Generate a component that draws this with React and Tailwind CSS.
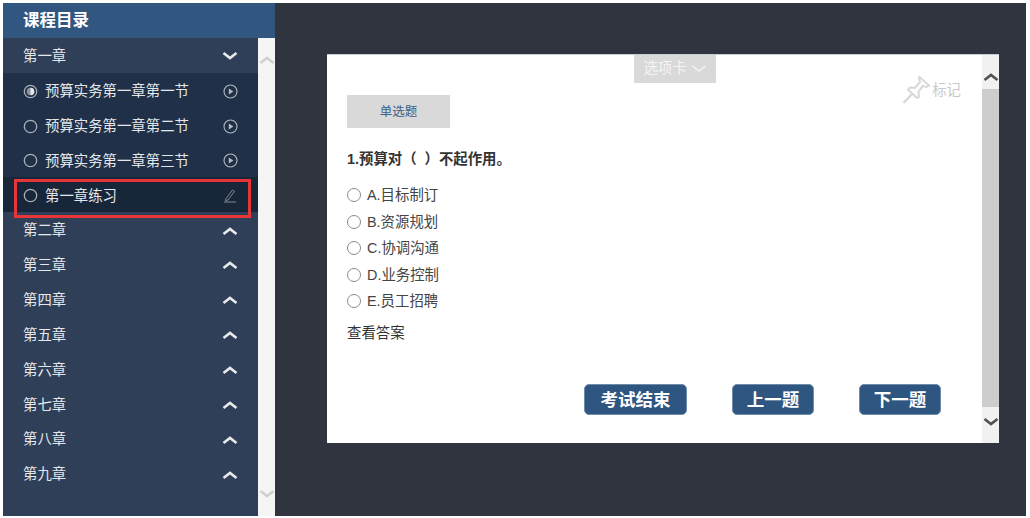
import React from "react";

const font = { fontFamily: '"Liberation Sans", "Noto Sans CJK SC", sans-serif' };

function Chevron({ up, className = "", thin }) {
  return (
    <svg width="16" height="10" viewBox="0 0 16 10" className={className}>
      <path d={up ? "M1.5 8 L8 3 L14.5 8" : "M1.5 2 L8 7 L14.5 2"} fill="none" stroke="currentColor" strokeWidth={thin ? "1.5" : "2.6"} />
    </svg>
  );
}

function Play() {
  return (
    <svg width="15" height="15" viewBox="0 0 15 15" className="text-[#b4bac2]">
      <circle cx="7.5" cy="7.5" r="6.5" fill="none" stroke="currentColor" strokeWidth="1.1" />
      <path d="M5.8 4.6 L10.4 7.5 L5.8 10.4 Z" fill="currentColor" />
    </svg>
  );
}

function Radio({ half }) {
  return (
    <svg width="15" height="15" viewBox="0 0 15 15" className="text-[#a9afb7]">
      <circle cx="7.5" cy="7.5" r="6.2" fill="none" stroke="currentColor" strokeWidth="1.3" />
      {half && <circle cx="7.5" cy="7.5" r="3.8" fill="#8f959d" />}
      {half && <path d="M7.5 3.7 A3.8 3.8 0 0 1 7.5 11.3 Z" fill="#e6e8ea" />}
    </svg>
  );
}

function Pencil() {
  return (
    <svg width="14" height="15" viewBox="0 0 14 15" className="text-[#808894]">
      <path d="M3 10.5 L9.5 2 L11.5 3.4 L5 12 L2.6 12.6 Z" fill="none" stroke="currentColor" strokeWidth="1" />
      <path d="M1 14 H13" stroke="currentColor" strokeWidth="1" />
    </svg>
  );
}

function Pin() {
  return (
    <svg width="30" height="30" viewBox="0 0 30 30" className="text-[#d8d8d8]">
      <path d="M17.5 2 L27 10.5 L24.5 12 L20.5 11 L16.5 17 L17 22 L15 23 L6 14.5 L8 12.5 L13 13 L18 7 L17 3.5 Z" fill="none" stroke="currentColor" strokeWidth="2" />
      <path d="M10 19 L1.5 28" stroke="currentColor" strokeWidth="2.4" />
    </svg>
  );
}

function Chapter({ title, open }) {
  return (
    <div className={`h-[34.85px] pt-[2px] flex items-center justify-between pl-[20px] pr-[20px] text-[14.4px] text-[#e4e7ea] ${open ? "bg-[#2f3f58]" : ""}`}>
      <span className="mt-[1px]">{title}</span>
      <Chevron up={!open} className="text-[#e8eaec]" />
    </div>
  );
}

function Lesson({ title, half, practice }) {
  return (
    <div className={`h-[34.85px] pt-[2px] flex items-center pl-[20px] pr-[20px] text-[14.4px] text-[#e4e7ea] ${practice ? "bg-[#18263a]" : ""}`}>
      <Radio half={half} />
      <span className="ml-[7px] mt-[2px] flex-1">{title}</span>
      {practice ? <span className="mr-[1px] flex"><Pencil /></span> : <Play />}
    </div>
  );
}

function Option({ text }) {
  return (
    <div className="h-[26.5px] flex items-center text-[14.4px] text-[#444]">
      <span className="w-[14px] h-[14px] rounded-full border border-[#8a8a8a] bg-white mr-[6px]" />
      <span className="mt-[2px]">{text}</span>
    </div>
  );
}

function Btn({ label, w }) {
  return (
    <button className={`h-[31px] pt-[2px] ${w} rounded-[5px] bg-[#2f5680] border border-[#6f8cab] text-white text-[17.5px] font-bold`}>
      {label}
    </button>
  );
}

export default function App() {
  return (
    <div style={font} className="relative w-[1030px] h-[518px] bg-white pt-[3px] pl-[3px] overflow-hidden">
      <div className="flex h-[513px] w-[1023px]">
        <aside className="w-[272px] shrink-0 flex flex-col">
          <div className="h-[35px] bg-[#315680] pl-[20px] flex items-center text-[16.5px] font-bold text-white">课程目录</div>
          <div className="flex flex-1 min-h-0">
            <div className="w-[255px] bg-[#2f3f58]">
              <Chapter title="第一章" open />
              <div className="bg-[#1f3048]">
                <Lesson title="预算实务第一章第一节" half />
                <Lesson title="预算实务第一章第二节" />
                <Lesson title="预算实务第一章第三节" />
                <Lesson title="第一章练习" practice />
              </div>
              {["第二章", "第三章", "第四章", "第五章", "第六章", "第七章", "第八章", "第九章"].map((t) => (
                <Chapter key={t} title={t} />
              ))}
            </div>
            <div className="w-[17px] bg-[#f5f5f5] flex flex-col items-center justify-between pt-[17px] pb-[17px] text-[#cfcfcf]">
              <Chevron up />
              <Chevron />
            </div>
          </div>
        </aside>
        <main className="flex-1 bg-[#30343e] pt-[51px] pl-[52px]">
          <div className="relative w-[672px] h-[389px] bg-white flex border-t border-[#c9ccd0]">
            <div className="flex-1 pl-[20px] pt-[40px] relative">
              <div className="absolute top-0 left-[307px] w-[82px] h-[28px] bg-[#d9d9d9] text-[#f4f4f4] text-[14.4px] flex items-center justify-center gap-[4px]">
                选项卡<Chevron thin className="text-[#f4f4f4]" />
              </div>
              <div className="absolute top-[20px] right-[21px] flex items-start text-[14.4px] text-[#c9c9c9]">
                <Pin />
                <span className="mt-[5px]">标记</span>
              </div>
              <div className="w-[103px] h-[33px] pt-[2px] bg-[#d9d9d9] text-[#3b6088] text-[12.5px] flex items-center justify-center">单选题</div>
              <div className="mt-[21px] text-[14.4px] font-bold text-[#333] h-[20px] leading-[20px]">1.预算对（&nbsp;&nbsp;）不起作用。</div>
              <div className="mt-[13px]">
                <Option text="A.目标制订" />
                <Option text="B.资源规划" />
                <Option text="C.协调沟通" />
                <Option text="D.业务控制" />
                <Option text="E.员工招聘" />
              </div>
              <div className="mt-[8px] text-[14.4px] text-[#333] leading-[20px]">查看答案</div>
              <div className="mt-[41px] ml-[237px] flex gap-[45px]">
                <Btn label="考试结束" w="w-[103px]" />
                <Btn label="上一题" w="w-[82px]" />
                <Btn label="下一题" w="w-[82px]" />
              </div>
            </div>
            <div className="w-[17px] bg-[#f1f1f1] flex flex-col text-[#505050]">
              <div className="h-[34px] pt-[9px] flex items-start justify-center"><Chevron up className="mt-[8px]" /></div>
              <div className="flex-1 bg-[#cdcdcd]" />
              <div className="h-[36px] pb-[6px] flex items-center justify-center"><Chevron /></div>
            </div>
          </div>
        </main>
      </div>
      <div className="absolute left-[14px] top-[179px] w-[237px] h-[39px] border-[3px] border-[#e8353a]" />
    </div>
  );
}
